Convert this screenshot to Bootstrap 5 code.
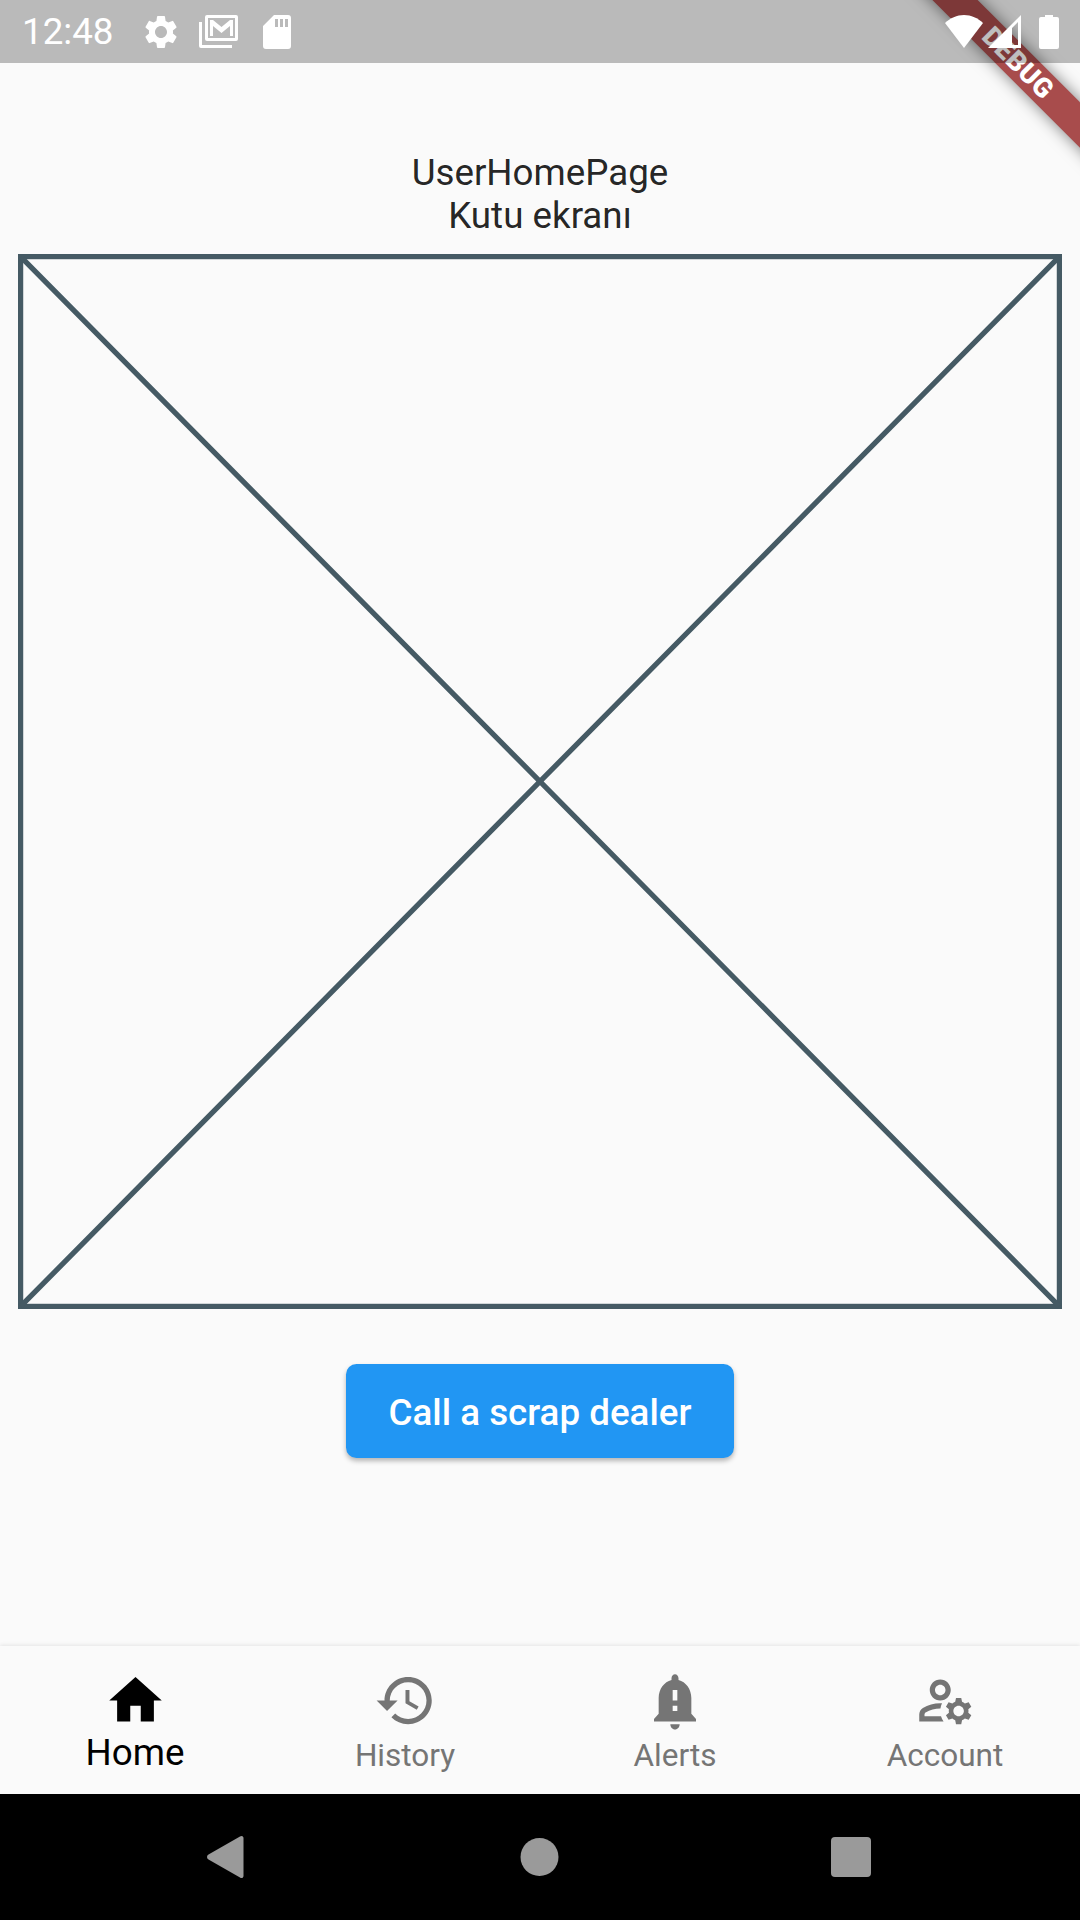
<!DOCTYPE html>
<html lang="en">
<head>
<meta charset="UTF-8">
<title>UserHomePage</title>
<link href="https://cdn.jsdelivr.net/npm/bootstrap@5.3.0/dist/css/bootstrap.min.css" rel="stylesheet">
<style>
html, body { margin: 0; height: 100%; background: #fafafa; font-family: Roboto, "Liberation Sans", sans-serif; }
.phone { width: 1080px; height: 1920px; overflow: hidden; position: relative; background: #fafafa; }
.status-bar { height: 63px; background: rgba(0,0,0,.256); color: #fff; font-size: 36.75px; padding-left: 22px; padding-right: 21px; position: relative; z-index: 2; }
.status-time { width: 119px; }
.mail-icon { margin-left: 18px; }
.signal-icon { margin-left: 5px; }
.battery-icon { margin-left: 18px; }
.page-title { margin-top: 89px; margin-bottom: 1px; font-size: 36.75px; line-height: 42.5px; color: rgba(0,0,0,.87); }
.wire-box { display: block; margin: 16px 18px 0; width: 1044px; height: 1055px; }
.call-btn { margin-top: 55px; width: 388px; height: 94px; padding-top: 9px; background: #2196f3; border: 0; border-radius: 10.5px; color: #fff; font-size: 36.75px; font-weight: 500; box-shadow: 0 3px 5px rgba(0,0,0,.28); }
.bottom-nav { height: 148px; background: #fafafa; box-shadow: 0 -1px 4px rgba(0,0,0,.09); position: relative; }
.nav-cell { width: 270px; height: 148px; color: #757575; font-size: 31.5px; line-height: 37px; padding-top: 23px; }
.nav-cell svg { display: block; width: 63px; height: 63px; fill: currentColor; margin-bottom: 5px; }
.nav-cell svg.bell-icon { width: 56px; }
.nav-cell.is-active { color: #000; font-size: 36.75px; line-height: 43px; }
.nav-cell.is-active svg { margin-bottom: -1px; }
.sys-bar { height: 126px; background: #000; }
.sys-bar svg { position: absolute; left: 0; top: 1794px; }
.debug-ribbon { position: absolute; z-index: 1; left: 868px; top: 47px; width: 300px; height: 32px; background: #a84c4c; box-shadow: 0 0 16px rgba(0,0,0,.5); color: #fff; font-weight: 900; font-size: 27px; line-height: 32px; text-align: center; transform: rotate(45deg); letter-spacing: .4px; }
</style>
</head>
<body>
<div class="phone d-flex flex-column">

  <div class="status-bar d-flex align-items-center flex-shrink-0">
    <span class="status-time">12:48</span>
    <svg width="40" height="40" viewBox="0 0 24 24" fill="#fff"><path d="M19.14 12.94c.04-.3.06-.61.06-.94 0-.32-.02-.64-.07-.94l2.03-1.58a.49.49 0 0 0 .12-.61l-1.92-3.32a.488.488 0 0 0-.59-.22l-2.39.96c-.5-.38-1.03-.7-1.62-.94l-.36-2.54a.484.484 0 0 0-.48-.41h-3.84c-.24 0-.43.17-.47.41l-.36 2.54c-.59.24-1.13.57-1.62.94l-2.39-.96c-.22-.08-.47 0-.59.22L2.74 8.87c-.12.21-.08.47.12.61l2.03 1.58c-.05.3-.09.63-.09.94s.02.64.07.94l-2.03 1.58a.49.49 0 0 0-.12.61l1.92 3.32c.12.22.37.29.59.22l2.39-.96c.5.38 1.03.7 1.62.94l.36 2.54c.05.24.24.41.48.41h3.84c.24 0 .44-.17.47-.41l.36-2.54c.59-.24 1.13-.56 1.62-.94l2.39.96c.22.08.47 0 .59-.22l1.92-3.32c.12-.22.07-.47-.12-.61l-2.01-1.58zM12 15.6c-1.98 0-3.6-1.62-3.6-3.6s1.62-3.6 3.6-3.6 3.6 1.62 3.6 3.6-1.62 3.6-3.6 3.6z"/></svg>
    <svg class="mail-icon" width="40" height="33" viewBox="0 0 40 33" fill="#fff"><path d="M0 7h3v23h30v3H2a2 2 0 0 1-2-2z"/><path fill-rule="evenodd" d="M8 0h29a2 2 0 0 1 2 2v22a2 2 0 0 1-2 2H8a2 2 0 0 1-2-2V2a2 2 0 0 1 2-2zm1 3v20h27V3z"/><path d="M11 5h3l8.5 7L31 5h3v16h-3V11l-8.5 7L14 11v10h-3z"/></svg>
    <svg class="ms-4" width="28" height="34" viewBox="0 0 28 34" fill="#fff"><path fill-rule="evenodd" d="M11 0h14a3 3 0 0 1 3 3v28a3 3 0 0 1-3 3H3a3 3 0 0 1-3-3V11zM12 4v8h3V4zm5 0v8h3V4zm5 0v8h3V4z"/></svg>
    <div class="ms-auto d-flex align-items-center">
      <svg width="38" height="33" viewBox="0 0 38 33" fill="#fff"><path d="M19 33L0 8C5 3 12 0 19 0s14 3 19 8z"/></svg>
      <svg class="signal-icon" width="33" height="33" viewBox="0 0 33 33" fill="#fff"><path fill-rule="evenodd" d="M33 0v33H0zM30 7L24 13v17h6z"/></svg>
      <svg class="battery-icon" width="20" height="34" viewBox="0 0 20 34" fill="#fff"><path d="M6 0h8v2h4a2 2 0 0 1 2 2v28a2 2 0 0 1-2 2H2a2 2 0 0 1-2-2V4a2 2 0 0 1 2-2h4z"/></svg>
    </div>
  </div>

  <div class="flex-grow-1 d-flex flex-column align-items-center">
    <div class="page-title text-center">UserHomePage<br>Kutu ekranı</div>
    <svg class="wire-box" viewBox="0 0 1044 1055" fill="none" stroke="#455a64" stroke-width="5.25">
      <rect x="2.6" y="2.6" width="1038.8" height="1049.8"/>
      <path d="M2.6 2.6L1041.4 1052.4M1041.4 2.6L2.6 1052.4"/>
    </svg>
    <button type="button" class="btn call-btn">Call a scrap dealer</button>
  </div>

  <div class="bottom-nav d-flex flex-shrink-0">
    <div class="nav-cell is-active d-flex flex-column align-items-center">
      <svg viewBox="0 0 24 24"><path d="M10 20v-6h4v6h5v-8h3L12 3 2 12h3v8z"/></svg>
      <span>Home</span>
    </div>
    <div class="nav-cell d-flex flex-column align-items-center">
      <svg viewBox="0 0 24 24"><path d="M13 3c-4.97 0-9 4.03-9 9H1l3.89 3.89.07.14L9 12H6c0-3.87 3.13-7 7-7s7 3.13 7 7-3.13 7-7 7c-1.93 0-3.68-.79-4.94-2.06l-1.42 1.42C8.27 19.99 10.51 21 13 21c4.97 0 9-4.03 9-9s-4.03-9-9-9zm-1 5v5l4.28 2.54.72-1.21-3.5-2.08V8H12z"/></svg>
      <span>History</span>
    </div>
    <div class="nav-cell d-flex flex-column align-items-center">
      <svg class="bell-icon" viewBox="0 0 24 24" preserveAspectRatio="none"><path d="M12 23c1.1 0 2-.9 2-2h-4c0 1.1.9 2 2 2zm7-6v-6c0-3.35-2.36-6.16-5.5-6.83V3.5C13.5 2.67 12.83 2 12 2s-1.5.67-1.5 1.5v.67C7.36 4.84 5 7.65 5 11v6l-2 2v1h18v-1l-2-2zm-6-1h-2v-2h2v2zm0-4h-2V8h2v4z"/></svg>
      <span>Alerts</span>
    </div>
    <div class="nav-cell d-flex flex-column align-items-center">
      <svg viewBox="0 0 24 24"><path d="M4 18v-.65c0-.34.16-.66.41-.81C6.1 15.53 8.03 15 10 15c.03 0 .05 0 .08.01.1-.7.3-1.37.59-1.98-.22-.02-.44-.03-.67-.03-2.42 0-4.68.67-6.61 1.82C2.51 15.34 2 16.32 2 17.35V20h9.26c-.42-.6-.75-1.28-.97-2H4z"/><path d="M10 12c2.21 0 4-1.79 4-4s-1.79-4-4-4-4 1.79-4 4 1.79 4 4 4zm0-6c1.1 0 2 .9 2 2s-.9 2-2 2-2-.9-2-2 .9-2 2-2z"/><path d="M20.75 16c0-.22-.03-.42-.06-.63l1.14-1.01-1-1.73-1.45.49c-.32-.27-.68-.48-1.08-.63L18 11h-2l-.3 1.49c-.4.15-.76.36-1.08.63l-1.45-.49-1 1.73 1.14 1.01c-.03.21-.06.41-.06.63s.03.42.06.63l-1.14 1.01 1 1.73 1.45-.49c.32.27.68.48 1.08.63L16 21h2l.3-1.49c.4-.15.76-.36 1.08-.63l1.45.49 1-1.73-1.14-1.01c.03-.21.06-.41.06-.63zM17 18c-1.1 0-2-.9-2-2s.9-2 2-2 2 .9 2 2-.9 2-2 2z"/></svg>
      <span>Account</span>
    </div>
  </div>

  <div class="sys-bar flex-shrink-0">
    <svg width="1080" height="126" viewBox="0 0 1080 126" fill="#9a9a9a">
      <path d="M240 42.5c1.5-1.2 3.5-.4 3.5 1.5v38c0 1.9-2 2.7-3.5 1.5l-31.5-18c-2-1.2-2-3.8 0-5z"/>
      <circle cx="539.5" cy="63" r="19"/>
      <rect x="831" y="43" width="40" height="40" rx="4"/>
    </svg>
  </div>

  <div class="debug-ribbon">DEBUG</div>
</div>
<script src="https://cdn.jsdelivr.net/npm/bootstrap@5.3.0/dist/js/bootstrap.bundle.min.js"></script>
</body>
</html>
